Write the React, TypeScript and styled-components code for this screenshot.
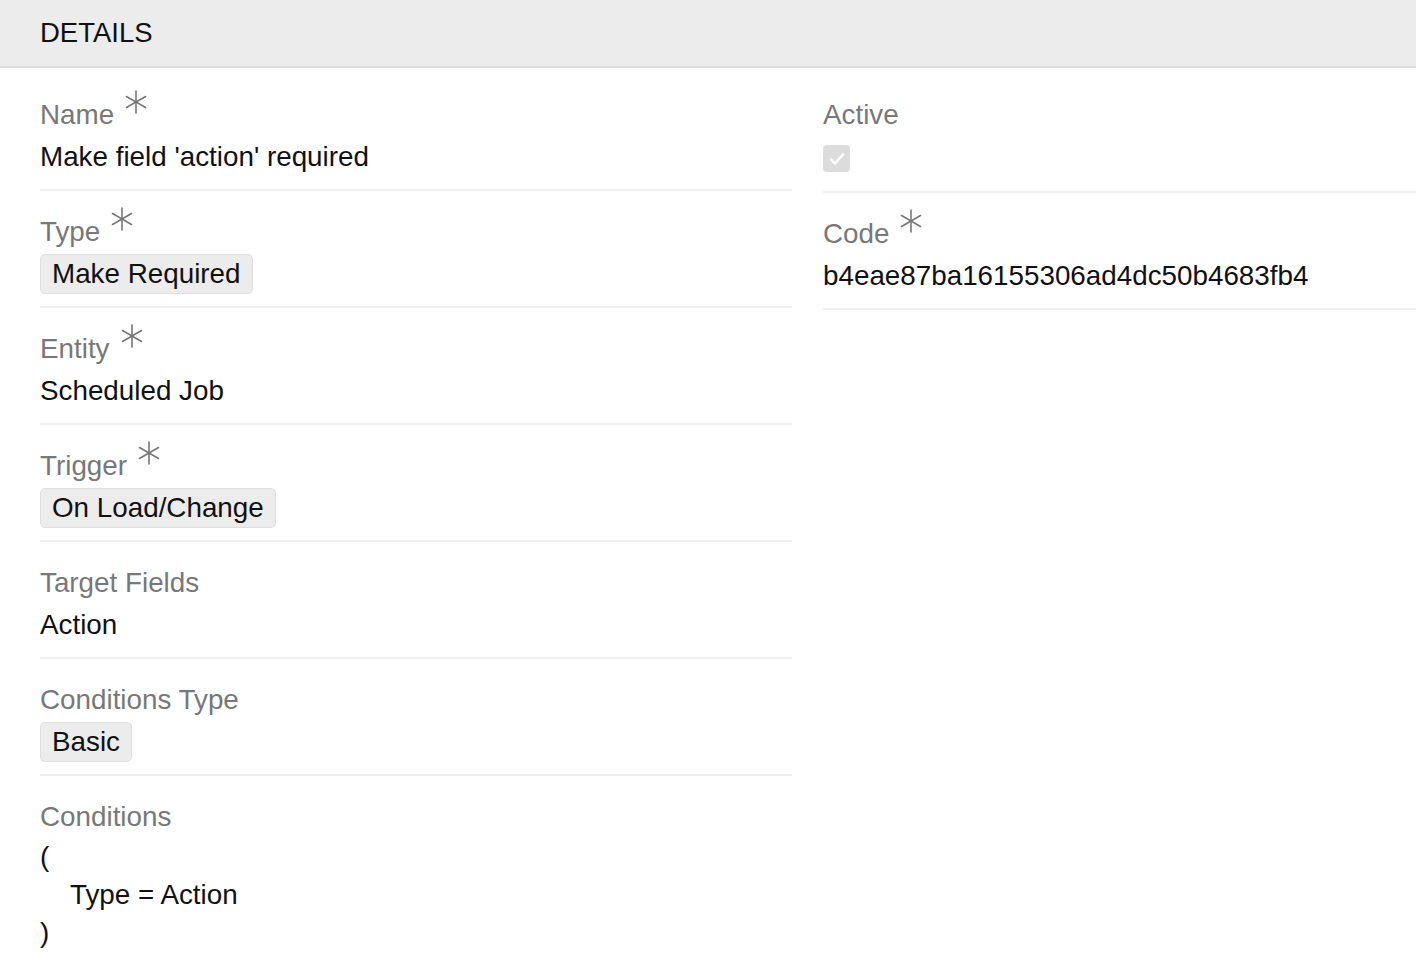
import React from "react";
import styled, { createGlobalStyle } from "styled-components";

const Global = createGlobalStyle`
  html, body { margin: 0; padding: 0; background: #fff; }
  body { font-family: "Liberation Sans", Arial, Helvetica, sans-serif; }
`;

const Header = styled.div`
  height: 66px;
  background: #ececec;
  border-bottom: 2px solid #dcdcdc;
  display: flex;
  align-items: center;
  padding-left: 40px;
  font-size: 27.5px;
  color: #111;
`;

const Grid = styled.div`
  display: grid;
  grid-template-columns: 752px 1fr;
  column-gap: 31px;
  padding: 6px 0 0 40px;
  align-items: start;
`;

const Column = styled.div`
  display: flex;
  flex-direction: column;
`;

const Field = styled.div<{ $tall?: boolean; $last?: boolean }>`
  padding: 22px 0 11px;
  min-height: ${(p) => (p.$tall ? 84 : 81)}px;
  border-bottom: ${(p) => (p.$last ? "none" : "2px solid #efefef")};
`;

const Label = styled.div`
  font-size: 27.8px;
  line-height: 38px;
  color: #787878;
  display: flex;
  align-items: flex-start;
`;

const Star = styled.svg`
  width: 24px;
  height: 24px;
  margin-left: 10px;
  margin-top: -6px;
`;

const Value = styled.div`
  font-size: 27.8px;
  line-height: 42px;
  color: #111;
  min-height: 42px;
  margin-top: 2px;
  display: flex;
  align-items: center;
`;

const Chip = styled.span`
  display: inline-block;
  background: #ececec;
  border: 1px solid #dedede;
  border-radius: 5px;
  padding: 0 11px;
  line-height: 38px;
  font-size: 27.8px;
  color: #111;
`;

const Check = styled.div`
  width: 27px;
  height: 27px;
  border-radius: 4px;
  background: #dcdcdc;
  display: flex;
  align-items: center;
  justify-content: center;
  margin-top: 11px;
`;

const Code = styled.div`
  font-size: 27.8px;
  line-height: 38px;
  color: #111;
  padding-top: 2px;
`;

const Indent = styled.div`
  padding-left: 30px;
`;

const Asterisk = () => (
  <Star viewBox="0 0 24 24" fill="none" stroke="#777" strokeWidth="1.6" strokeLinecap="round">
    <line x1="12" y1="1" x2="12" y2="23" />
    <line x1="2.5" y1="6.5" x2="21.5" y2="17.5" />
    <line x1="2.5" y1="17.5" x2="21.5" y2="6.5" />
  </Star>
);

const F: React.FC<{ label: string; req?: boolean; children: React.ReactNode; last?: boolean; tall?: boolean }> = ({
  label, req, children, last, tall,
}) => (
  <Field $last={last} $tall={tall}>
    <Label>
      {label}
      {req && <Asterisk />}
    </Label>
    {children}
  </Field>
);

export default function App() {
  return (
    <>
      <Global />
      <Header>DETAILS</Header>
      <Grid>
        <Column>
          <F label="Name" req>
            <Value>Make field 'action' required</Value>
          </F>
          <F label="Type" req>
            <Value><Chip>Make Required</Chip></Value>
          </F>
          <F label="Entity" req>
            <Value>Scheduled Job</Value>
          </F>
          <F label="Trigger" req>
            <Value><Chip>On Load/Change</Chip></Value>
          </F>
          <F label="Target Fields">
            <Value>Action</Value>
          </F>
          <F label="Conditions Type">
            <Value><Chip>Basic</Chip></Value>
          </F>
          <F label="Conditions" last>
            <Code>
              <div>(</div>
              <Indent>Type = Action</Indent>
              <div>)</div>
            </Code>
          </F>
        </Column>
        <Column>
          <F label="Active" tall>
            <Check>
              <svg width="20" height="20" viewBox="0 0 20 20" fill="none" stroke="#fff" strokeWidth="2.6" strokeLinecap="round" strokeLinejoin="round">
                <polyline points="4,10.5 8,14.5 16,5.5" />
              </svg>
            </Check>
          </F>
          <F label="Code" req>
            <Value>b4eae87ba16155306ad4dc50b4683fb4</Value>
          </F>
        </Column>
      </Grid>
    </>
  );
}
